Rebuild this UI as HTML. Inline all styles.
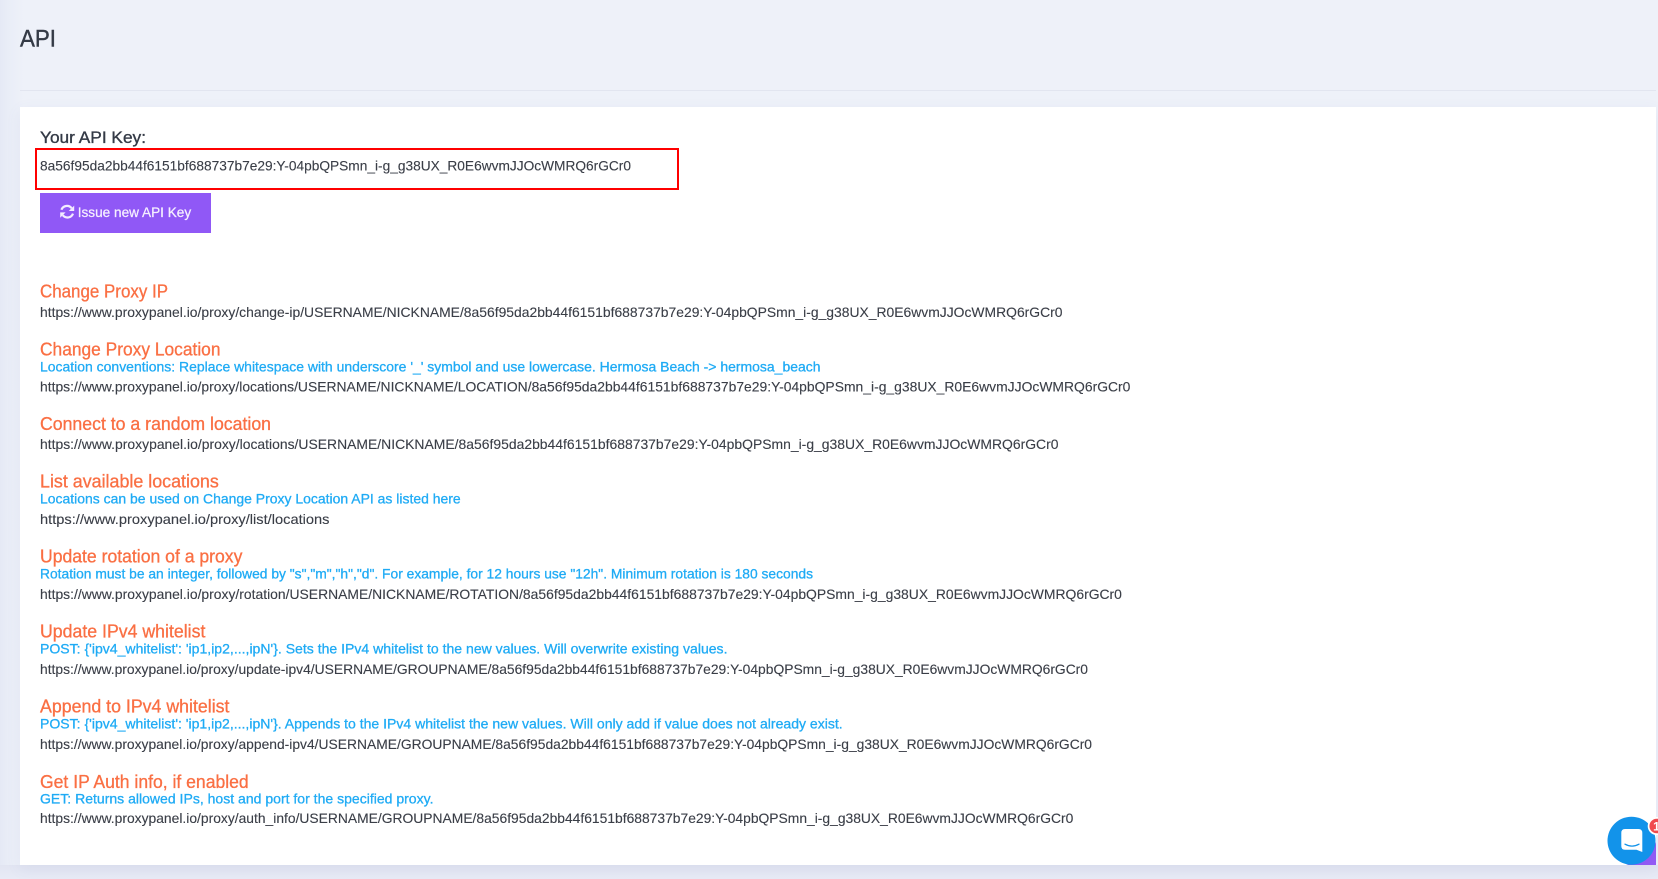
<!DOCTYPE html>
<html lang="en">
<head>
<meta charset="utf-8">
<title>API</title>
<style>
html,body{margin:0;padding:0;width:1658px;height:879px;overflow:hidden;background:#eef1f9}
body{position:relative;font-family:"Liberation Sans",sans-serif}
.side{position:absolute;left:0;top:0;width:24px;height:879px;background:linear-gradient(90deg,#e5e9f5 0,#e9edf7 8px,#eef1f9 24px)}
.bottom{position:absolute;left:0;top:865px;width:1658px;height:14px;background:linear-gradient(180deg,#e2e5f2,#e8ebf6)}
.rule{position:absolute;left:20px;top:90px;width:1636px;height:1px;background:#e2e5f0}
.card{position:absolute;left:20px;top:107px;width:1636px;height:758px;background:#fff;box-shadow:0 4px 14px rgba(90,100,170,.08)}
svg{position:absolute;left:0;top:0}
text{font-family:"Liberation Sans",sans-serif}
.u{font-size:14px;fill:#3a3e47;stroke:#3a3e47;stroke-width:.12}
.h{font-size:18px;fill:#fa6f43;stroke:#fa6f43;stroke-width:.3}
.b{font-size:14px;fill:#1fabf5;stroke:#1fabf5;stroke-width:.3}
</style>
</head>
<body>
<div class="side"></div>
<div class="bottom"></div>
<div class="rule"></div>
<div class="card"></div>
<svg width="1658" height="879" viewBox="0 0 1658 879" xmlns="http://www.w3.org/2000/svg">
<defs>
<linearGradient id="pg" x1="0" y1="0" x2="1" y2="1"><stop offset="0" stop-color="#7d5cf0"/><stop offset="1" stop-color="#955af5"/></linearGradient>
</defs>
<text x="20" y="46.7" font-size="24" fill="#343a46" stroke="#343a46" stroke-width=".4" textLength="36" lengthAdjust="spacingAndGlyphs">API</text>
<text x="40" y="143.2" font-size="17" fill="#343a46" stroke="#343a46" stroke-width=".35" textLength="106" lengthAdjust="spacingAndGlyphs">Your API Key:</text>
<rect x="36" y="149" width="642" height="40" fill="none" stroke="#f00" stroke-width="2"/>
<text class="u" x="40" y="170.7" textLength="591" lengthAdjust="spacingAndGlyphs">8a56f95da2bb44f6151bf688737b7e29:Y-04pbQPSmn_i-g_g38UX_R0E6wvmJJOcWMRQ6rGCr0</text>
<rect x="40" y="193" width="171" height="40" fill="#9058f6"/>
<g fill="none" stroke="#f3ecff" stroke-width="2.2">
<path d="M61.4 209.8A5.9 5.9 0 0 1 71.6 208.2"/>
<path d="M73 213.6A5.9 5.9 0 0 1 62.8 215.2"/>
</g>
<path d="M74.2 205.6V211H68.8Z M60.2 217.8V212.4H65.6Z" fill="#f3ecff"/>
<text x="77.7" y="216.8" font-size="14" fill="#f5efff" stroke="#f5efff" stroke-width=".25" textLength="113.5" lengthAdjust="spacingAndGlyphs">Issue new API Key</text>

<text class="h" x="40" y="297.6" textLength="128" lengthAdjust="spacingAndGlyphs">Change Proxy IP</text>
<text class="u" x="40" y="317.2" textLength="1022.5" lengthAdjust="spacingAndGlyphs">https://www.proxypanel.io/proxy/change-ip/USERNAME/NICKNAME/8a56f95da2bb44f6151bf688737b7e29:Y-04pbQPSmn_i-g_g38UX_R0E6wvmJJOcWMRQ6rGCr0</text>

<text class="h" x="40" y="355.7" textLength="180.5" lengthAdjust="spacingAndGlyphs">Change Proxy Location</text>
<text class="b" x="40" y="371.6" textLength="780.5" lengthAdjust="spacingAndGlyphs">Location conventions: Replace whitespace with underscore '_' symbol and use lowercase. Hermosa Beach -&gt; hermosa_beach</text>
<text class="u" x="40" y="391.4" textLength="1090.4" lengthAdjust="spacingAndGlyphs">https://www.proxypanel.io/proxy/locations/USERNAME/NICKNAME/LOCATION/8a56f95da2bb44f6151bf688737b7e29:Y-04pbQPSmn_i-g_g38UX_R0E6wvmJJOcWMRQ6rGCr0</text>

<text class="h" x="40" y="429.8" textLength="231" lengthAdjust="spacingAndGlyphs">Connect to a random location</text>
<text class="u" x="40" y="449" textLength="1018.5" lengthAdjust="spacingAndGlyphs">https://www.proxypanel.io/proxy/locations/USERNAME/NICKNAME/8a56f95da2bb44f6151bf688737b7e29:Y-04pbQPSmn_i-g_g38UX_R0E6wvmJJOcWMRQ6rGCr0</text>

<text class="h" x="40" y="487.6" textLength="178.8" lengthAdjust="spacingAndGlyphs">List available locations</text>
<text class="b" x="40" y="503.6" textLength="420.7" lengthAdjust="spacingAndGlyphs">Locations can be used on Change Proxy Location API as listed here</text>
<text class="u" x="40" y="524" textLength="289.5" lengthAdjust="spacingAndGlyphs">https://www.proxypanel.io/proxy/list/locations</text>

<text class="h" x="40" y="562.7" textLength="202.4" lengthAdjust="spacingAndGlyphs">Update rotation of a proxy</text>
<text class="b" x="40" y="578.6" textLength="773" lengthAdjust="spacingAndGlyphs">Rotation must be an integer, followed by "s","m","h","d". For example, for 12 hours use "12h". Minimum rotation is 180 seconds</text>
<text class="u" x="40" y="599" textLength="1081.9" lengthAdjust="spacingAndGlyphs">https://www.proxypanel.io/proxy/rotation/USERNAME/NICKNAME/ROTATION/8a56f95da2bb44f6151bf688737b7e29:Y-04pbQPSmn_i-g_g38UX_R0E6wvmJJOcWMRQ6rGCr0</text>

<text class="h" x="40" y="637.7" textLength="165.4" lengthAdjust="spacingAndGlyphs">Update IPv4 whitelist</text>
<text class="b" x="40" y="653.6" textLength="687.5" lengthAdjust="spacingAndGlyphs">POST: {'ipv4_whitelist': 'ip1,ip2,...,ipN'}. Sets the IPv4 whitelist to the new values. Will overwrite existing values.</text>
<text class="u" x="40" y="674" textLength="1048" lengthAdjust="spacingAndGlyphs">https://www.proxypanel.io/proxy/update-ipv4/USERNAME/GROUPNAME/8a56f95da2bb44f6151bf688737b7e29:Y-04pbQPSmn_i-g_g38UX_R0E6wvmJJOcWMRQ6rGCr0</text>

<text class="h" x="40" y="712.7" textLength="189.5" lengthAdjust="spacingAndGlyphs">Append to IPv4 whitelist</text>
<text class="b" x="40" y="728.6" textLength="802.7" lengthAdjust="spacingAndGlyphs">POST: {'ipv4_whitelist': 'ip1,ip2,...,ipN'}. Appends to the IPv4 whitelist the new values. Will only add if value does not already exist.</text>
<text class="u" x="40" y="749" textLength="1052" lengthAdjust="spacingAndGlyphs">https://www.proxypanel.io/proxy/append-ipv4/USERNAME/GROUPNAME/8a56f95da2bb44f6151bf688737b7e29:Y-04pbQPSmn_i-g_g38UX_R0E6wvmJJOcWMRQ6rGCr0</text>

<text class="h" x="40" y="787.8" textLength="208.7" lengthAdjust="spacingAndGlyphs">Get IP Auth info, if enabled</text>
<text class="b" x="40" y="803.6" textLength="393.5" lengthAdjust="spacingAndGlyphs">GET: Returns allowed IPs, host and port for the specified proxy.</text>
<text class="u" x="40" y="823" textLength="1033.3" lengthAdjust="spacingAndGlyphs">https://www.proxypanel.io/proxy/auth_info/USERNAME/GROUPNAME/8a56f95da2bb44f6151bf688737b7e29:Y-04pbQPSmn_i-g_g38UX_R0E6wvmJJOcWMRQ6rGCr0</text>

<path d="M1626 865H1656V842Q1650 860 1626 865Z" fill="url(#pg)"/>
<circle cx="1631.5" cy="840.7" r="24" fill="#1293ea"/>
<path d="M1625 829H1638.5Q1642.3 829 1642.3 833V852L1636.5 849.8H1625Q1621.3 849.8 1621.3 846V833Q1621.3 829 1625 829Z" fill="#fff"/>
<path d="M1625 844.2Q1632 848 1639 844.2" fill="none" stroke="#1293ea" stroke-width="1.3" stroke-linecap="round"/>
<circle cx="1656.7" cy="826" r="9" fill="#fff"/>
<circle cx="1656.7" cy="826" r="7.3" fill="#f04a4e"/>
<text x="1656.5" y="830.3" font-size="12" font-weight="700" fill="#fff" text-anchor="middle">1</text>
</svg>
</body>
</html>
